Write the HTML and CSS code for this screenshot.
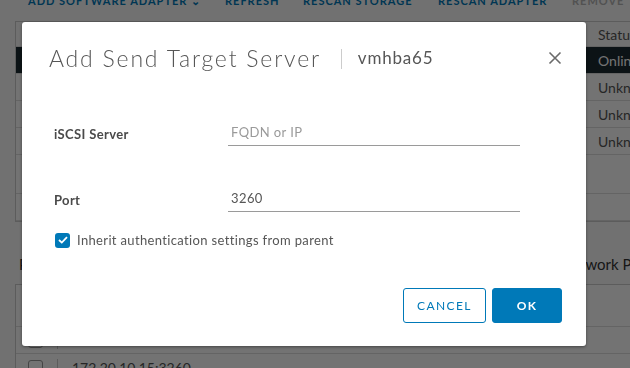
FILE: index.html
```html
<!DOCTYPE html>
<html>
<head>
    <title>Add Send Target Server</title>
    <link rel="stylesheet" href="styles.css">
</head>
<body>
    <div class="page">
        <div class="toolbar">
            <span class="tb-add">ADD SOFTWARE ADAPTER &#8964;</span>
            <span class="tb-refresh">REFRESH</span>
            <span class="tb-storage">RESCAN STORAGE</span>
            <span class="tb-adapter">RESCAN ADAPTER</span>
            <span class="disabled">REMOVE</span>
        </div>
        <div class="grid">
            <div class="grid-row head"><span class="cell-status">Status</span></div>
            <div class="grid-row selected"><span class="cell-status">Online</span></div>
            <div class="grid-row"><span class="cell-status">Unknown</span></div>
            <div class="grid-row"><span class="cell-status">Unknown</span></div>
            <div class="grid-row"><span class="cell-status">Unknown</span></div>
            <div class="grid-row tall"></div>
            <div class="grid-row"></div>
        </div>
        <div class="tabs">
            <span>Properties</span>
            <span class="tab-right">Network Port Binding</span>
        </div>
        <div class="grid lower">
            <div class="grid-row spacer"></div>
            <div class="grid-row check-row"><span class="bg-check"></span><span class="cell-text">local server</span></div>
            <div class="grid-row check-row"><span class="bg-check"></span><span class="cell-text">172.20.10.15:3260</span></div>
        </div>
    </div>

    <div class="backdrop"></div>

    <div class="modal">
        <div class="modal-header">
            <h2 class="modal-title">Add Send Target Server</h2>
            <span class="divider"></span>
            <span class="modal-sub">vmhba65</span>
            <button class="close-btn" aria-label="Close">
                <svg width="14" height="14" viewBox="0 0 14 14">
                    <path d="M1.5 1.5 L12.5 12.5 M12.5 1.5 L1.5 12.5" stroke="#6a6a6a" stroke-width="1.6" fill="none"/>
                </svg>
            </button>
        </div>
        <div class="modal-body">
            <div class="form-row">
                <label class="form-label">iSCSI Server</label>
                <input class="form-input" type="text" placeholder="FQDN or IP">
            </div>
            <div class="form-row port-row">
                <label class="form-label">Port</label>
                <input class="form-input" type="text" value="3260">
            </div>
            <div class="check-line">
                <span class="checkbox">
                    <svg width="10" height="8" viewBox="0 0 10 8">
                        <path d="M1 4 L3.8 6.6 L9 1.2" stroke="#fff" stroke-width="1.8" fill="none"/>
                    </svg>
                </span>
                <span class="check-label">Inherit authentication settings from parent</span>
            </div>
        </div>
        <div class="modal-footer">
            <button class="btn btn-outline">CANCEL</button>
            <button class="btn btn-primary">OK</button>
        </div>
    </div>
</body>
</html>
```

FILE: styles.css
```css
html, body {
    margin: 0;
    padding: 0;
    height: 100%;
    overflow: hidden;
}
body {
    font-family: Lato, "Noto Sans", sans-serif;
    background: #fafafa;
    color: #565656;
}
.page {
    padding-left: 15px;
}
.toolbar {
    display: flex;
    height: 16px;
    margin-top: -7px;
    padding-left: 13px;
    font-size: 11px;
    font-weight: bold;
    letter-spacing: 1px;
    color: #0079b8;
    line-height: 16px;
    white-space: nowrap;
}
.tb-add { width: 197px; }
.tb-refresh { width: 78px; }
.tb-storage { width: 135px; }
.tb-adapter { width: 134px; }
.toolbar .disabled {
    color: #b5b5b5;
}
.grid {
    margin-top: 12px;
    border: 1px solid #ccc;
    border-right: none;
    background: #fff;
}
.grid-row {
    height: 26px;
    border-bottom: 1px solid #ddd;
    display: flex;
    align-items: center;
    font-size: 14px;
    white-space: nowrap;
}
.grid-row.tall {
    height: 38px;
}
.grid-row.head {
    height: 24px;
    background: #fafafa;
}
.grid-row.selected {
    background: #1b2a32;
    color: #fff;
}
.cell-status {
    margin-left: 582px;
}
.tabs {
    display: flex;
    height: 40px;
    padding-top: 22px;
    align-items: center;
    font-size: 15px;
    color: #333;
    padding-left: 4px;
    white-space: nowrap;
}
.tab-right {
    margin-left: auto;
    margin-right: -74px;
}
.grid.lower {
    margin-top: 0;
}
.grid-row.spacer {
    height: 41px;
}
.check-row .bg-check {
    width: 13px;
    height: 13px;
    border: 1px solid #999;
    border-radius: 3px;
    margin-left: 12px;
    margin-right: 14px;
    background: #fff;
}
.cell-text {
    border-left: 1px solid #ccc;
    padding-left: 14px;
}

.backdrop {
    position: fixed;
    inset: 0;
    background: rgba(0, 0, 0, 0.55);
}

.modal {
    position: absolute;
    left: 22px;
    top: 22px;
    width: 564px;
    height: 324px;
    box-sizing: border-box;
    background: #fff;
    border-radius: 3px;
    box-shadow: 0 1px 3px rgba(0, 0, 0, 0.4);
    padding: 0 24px 0 27px;
    display: flex;
    flex-direction: column;
}
.modal-header {
    display: flex;
    align-items: center;
    height: 71px;
}
.modal-title {
    margin: 0;
    font-size: 23px;
    font-weight: 300;
    color: #565656;
    letter-spacing: 1.8px;
}
.divider {
    width: 1px;
    height: 20px;
    background: #ccc;
    margin: 2px 16px 0 20px;
}
.modal-sub {
    font-size: 17px;
    color: #565656;
    letter-spacing: 0.8px;
}
.close-btn {
    margin-left: auto;
    margin-right: 0;
    border: none;
    background: none;
    padding: 0;
    display: flex;
}
.modal-body {
    padding-left: 5px;
    padding-top: 28px;
    flex: 1;
}
.form-row {
    display: flex;
    align-items: center;
}
.port-row {
    margin-top: 41px;
}
.form-label {
    width: 174px;
    font-size: 13px;
    font-weight: bold;
    color: #4a4a4a;
    letter-spacing: 0.35px;
}
.form-input {
    width: 292px;
    box-sizing: border-box;
    border: none;
    border-bottom: 1px solid #9a9a9a;
    font-family: inherit;
    font-size: 13px;
    color: #565656;
    padding: 3px 2px 5px 3px;
    outline: none;
    letter-spacing: 0.4px;
}
.form-input::placeholder {
    color: #9a9a9a;
}
.check-line {
    display: flex;
    align-items: center;
    margin-top: 20px;
    margin-left: 1px;
}
.checkbox {
    width: 15px;
    height: 15px;
    border-radius: 3px;
    background: #0079b8;
    display: flex;
    align-items: center;
    justify-content: center;
    margin-right: 7px;
}
.check-label {
    font-size: 13px;
    color: #565656;
    letter-spacing: 0.35px;
}
.modal-footer {
    display: flex;
    justify-content: flex-end;
    gap: 6px;
    height: 58px;
}
.btn {
    height: 35px;
    box-sizing: border-box;
    border-radius: 3px;
    font-family: inherit;
    font-size: 12px;
    font-weight: bold;
    letter-spacing: 1.4px;
    padding: 0;
}
.btn-outline {
    width: 83px;
    background: #fff;
    border: 1px solid #0079b8;
    color: #0079b8;
    font-weight: normal;
}
.btn-primary {
    width: 70px;
    background: #0079b8;
    border: 1px solid #0079b8;
    color: #fff;
}
```
